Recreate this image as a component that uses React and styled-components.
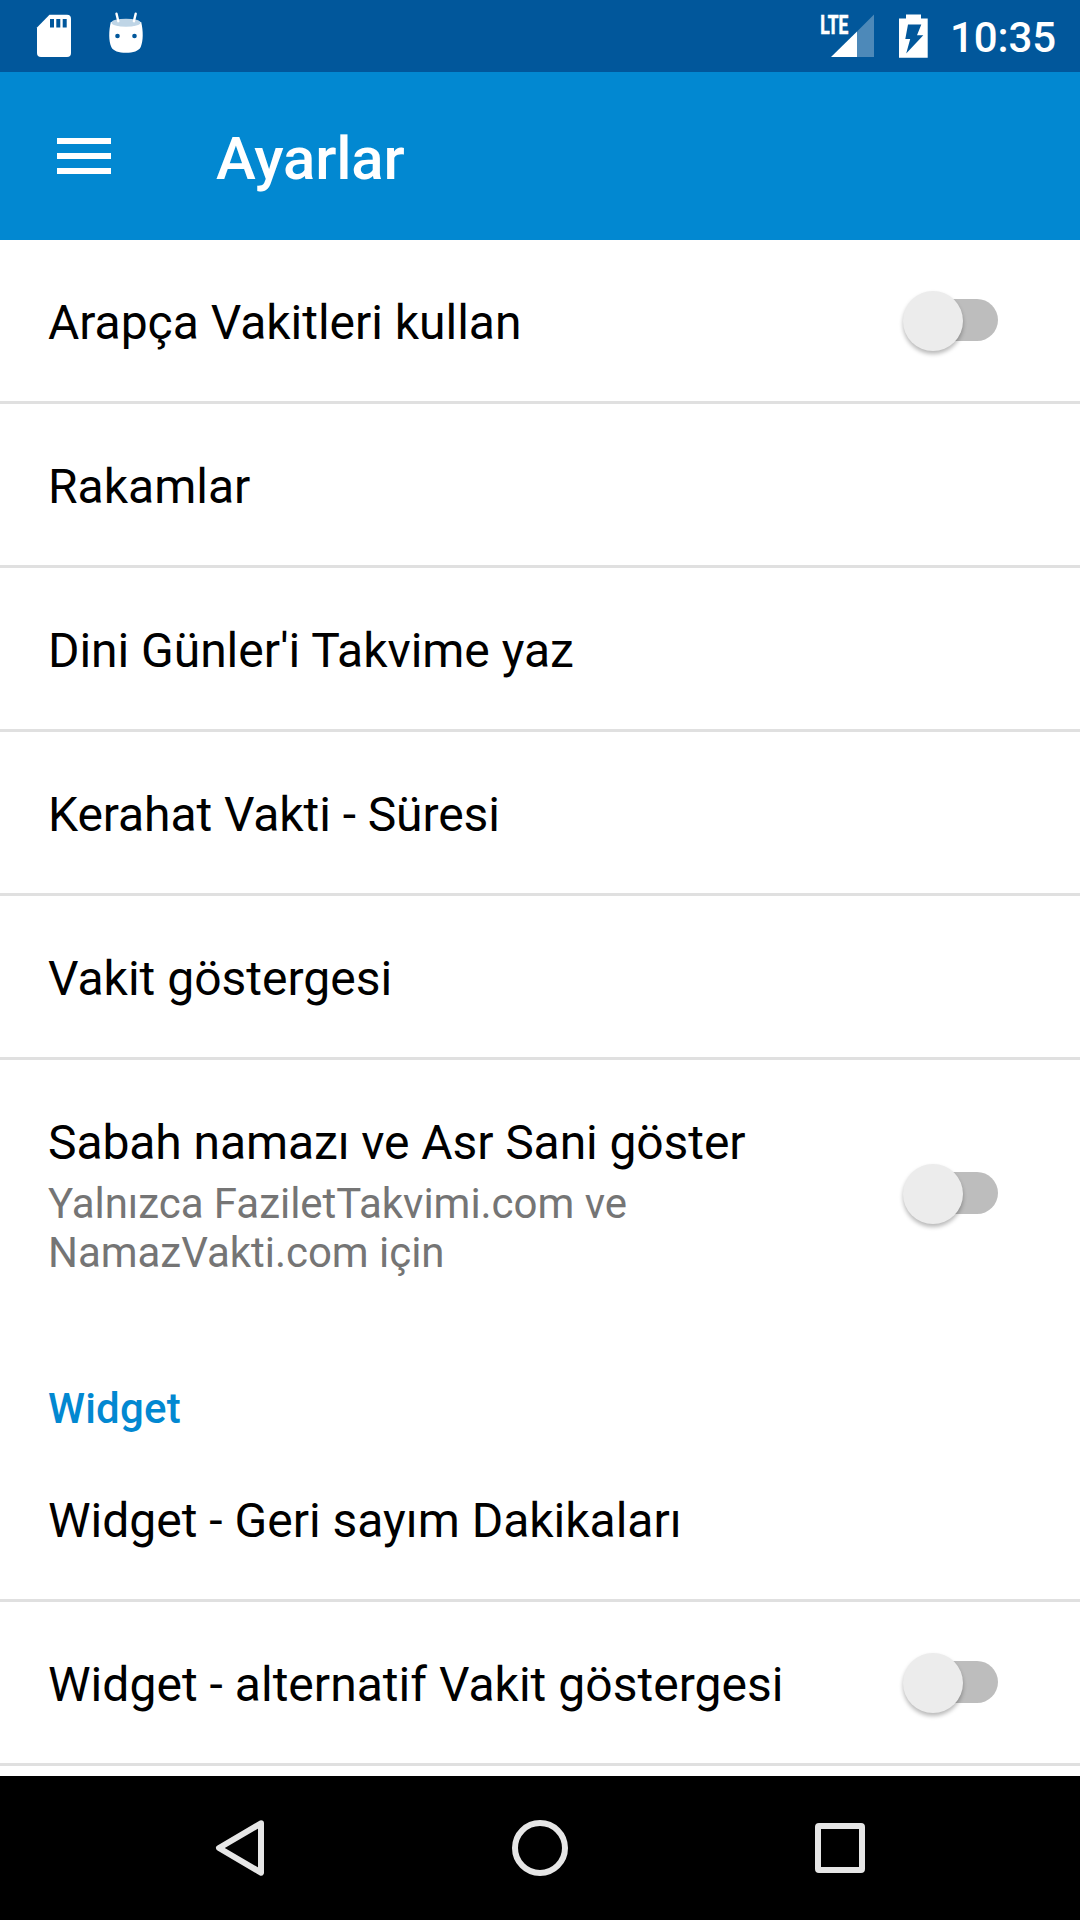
import React from "react";
import styled, { createGlobalStyle } from "styled-components";

const GlobalStyle = createGlobalStyle`
  * { box-sizing: border-box; }
  body { margin: 0; background: #fff; font-family: Roboto, "Noto Sans", sans-serif; }
`;

const Screen = styled.div`
  display: flex;
  flex-direction: column;
  width: 1080px;
  height: 1920px;
  overflow: hidden;
  background: #fff;
`;

const StatusBar = styled.div`
  display: flex;
  justify-content: space-between;
  flex: 0 0 72px;
  background: #01579b;
  color: #fff;
`;

const StatusGroup = styled.div`
  display: flex;
  align-items: flex-start;
`;

const Glyph = styled.svg`
  display: block;
  flex: none;
`;

const NetworkType = styled.text`
  font-family: Roboto, sans-serif;
  font-size: 26px;
  font-weight: 700;
  fill: #fff;
  stroke: #fff;
  stroke-width: 0.7px;
`;

const Clock = styled.time`
  width: 130px;
  padding-top: 13px;
  font-size: 42px;
  line-height: 50px;
  font-weight: 500;
  letter-spacing: -0.1px;
  white-space: nowrap;
`;

const AppBar = styled.header`
  display: flex;
  align-items: center;
  flex: 0 0 168px;
  padding-left: 57px;
  background: #0288d1;
  color: #fff;
`;

const MenuButton = styled.button`
  display: flex;
  flex-direction: column;
  gap: 9px;
  width: 54px;
  padding: 0;
  border: 0;
  background: none;
`;

const MenuLine = styled.span`
  height: 6px;
  background: #fff;
`;

const Title = styled.h1`
  margin: 6px 0 0 105px;
  font-size: 60px;
  line-height: 70px;
  font-weight: 500;
  letter-spacing: -0.15px;
`;

const List = styled.main`
  flex: 1;
  min-height: 0;
  overflow: hidden;
`;

const Row = styled.div`
  display: flex;
  align-items: center;
  justify-content: space-between;
  height: ${(p) => (p.$tall ? 266 : 164)}px;
  padding: 0 82px ${(p) => (p.$tall ? 0 : 1)}px 48px;
  border-bottom: ${(p) => (p.$tall ? "0" : "3px solid #e0e0e0")};
`;

const RowText = styled.div`
  align-self: flex-start;
  padding-top: 50px;
`;

const Label = styled.div`
  font-size: 48px;
  line-height: 65px;
  letter-spacing: ${(p) => p.$tracking || 0}px;
  color: #000;
  white-space: nowrap;
`;

const Summary = styled.div`
  width: 640px;
  margin-top: 4px;
  font-size: 42px;
  line-height: 49px;
  letter-spacing: -0.03px;
  color: #757575;
`;

const Category = styled.h2`
  height: 112px;
  margin: 0;
  padding: 58px 48px 0;
  font-size: 42px;
  line-height: 50px;
  font-weight: 500;
  letter-spacing: 0.2px;
  color: #0288d1;
`;

const Track = styled.div`
  display: flex;
  align-items: center;
  width: 84px;
  height: 42px;
  border-radius: 21px;
  background: #bdbdbd;
`;

const Thumb = styled.div`
  flex: none;
  width: 60px;
  height: 60px;
  margin: 1px 0 0 -11.5px;
  border-radius: 50%;
  background: #ececec;
  box-shadow: 0 3px 4px rgba(0, 0, 0, 0.28);
`;

const NavBar = styled.nav`
  display: flex;
  justify-content: center;
  align-items: center;
  gap: 210px;
  flex: 0 0 144px;
  background: #000;
`;

const Switch = () => (
  <Track role="switch" aria-checked="false">
    <Thumb />
  </Track>
);

const Setting = ({ label, summary, toggle, tracking }) => (
  <Row $tall={Boolean(summary)}>
    <RowText>
      <Label $tracking={tracking}>{label}</Label>
      {summary && <Summary>{summary}</Summary>}
    </RowText>
    {toggle && <Switch />}
  </Row>
);

export default function App() {
  return (
    <>
      <GlobalStyle />
      <Screen>
        <StatusBar>
          <StatusGroup>
            <Glyph width="160" height="72" viewBox="0 0 160 72">
              <path fill="#fff" d="M49.5 14.700H67a4 4 0 0 1 4 4V53a4 4 0 0 1-4 4H41a4 4 0 0 1-4-4V27.500Z" />
              <path fill="#01579b" d="M50 19h4v8.500h-4zM56.300 19h4v8.500h-4zM62.700 19h4v8.500h-4z" />
              <path fill="#fff" d="M110.800 22C108.700 31 108.600 41 111.300 47C113 51 119 52.800 126 52.800S139 51 140.700 47C143.400 41 143.300 31 141.200 22Z" />
              <ellipse cx="126" cy="22.700" rx="14.600" ry="4" fill="#bfd5e6" />
              <path stroke="#fff" strokeWidth="2.400" strokeLinecap="round" d="m116.500 13.700 1.800 7.500m17.400-7.500-1.800 7.500" />
              <circle cx="117.500" cy="36" r="2.300" fill="#01579b" />
              <circle cx="134.500" cy="36" r="2.300" fill="#01579b" />
            </Glyph>
          </StatusGroup>
          <StatusGroup>
            <Glyph width="130" height="72" viewBox="820 0 130 72">
              <path fill="#4d89b9" d="M857 31.500 874 14.500V57h-17Z" />
              <path fill="#fff" d="M831 57 857 31.500V57Z" />
              <NetworkType x="820.3" y="33.600" textLength="28" lengthAdjust="spacingAndGlyphs">
                LTE
              </NetworkType>
              <path fill="#fff" d="M906 14.500h15v4h6.700V57.700H899V18.500h7Z" />
              <path fill="#01579b" d="M908 24.500h13.300l-4.300 10.800h6.300L906.200 53.500l4-14.500H905.300Z" />
            </Glyph>
            <Clock>10:35</Clock>
          </StatusGroup>
        </StatusBar>
        <AppBar>
          <MenuButton aria-label="Menü">
            <MenuLine />
            <MenuLine />
            <MenuLine />
          </MenuButton>
          <Title>Ayarlar</Title>
        </AppBar>
        <List>
          <Setting label="Arapça Vakitleri kullan" tracking={-0.02} toggle />
          <Setting label="Rakamlar" />
          <Setting label="Dini Günler'i Takvime yaz" tracking={-0.04} />
          <Setting label="Kerahat Vakti - Süresi" tracking={-0.08} />
          <Setting label="Vakit göstergesi" />
          <Setting
            label="Sabah namazı ve Asr Sani göster"
            tracking={-0.09}
            summary="Yalnızca FaziletTakvimi.com ve NamazVakti.com için"
            toggle
          />
          <Category>Widget</Category>
          <Setting label="Widget - Geri sayım Dakikaları" />
          <Setting label="Widget - alternatif Vakit göstergesi" tracking={0.03} toggle />
        </List>
        <NavBar>
          <Glyph width="90" height="90" viewBox="0 0 90 90">
            <path d="M66 20.300 24 45 66 69.700Z" fill="none" stroke="#e6e6e6" strokeWidth="6" strokeLinejoin="round" />
          </Glyph>
          <Glyph width="90" height="90" viewBox="0 0 90 90">
            <circle cx="45" cy="45" r="25" fill="none" stroke="#e6e6e6" strokeWidth="6" />
          </Glyph>
          <Glyph width="90" height="90" viewBox="0 0 90 90">
            <rect x="23" y="23" width="44" height="44" rx="1" fill="none" stroke="#e6e6e6" strokeWidth="6" />
          </Glyph>
        </NavBar>
      </Screen>
    </>
  );
}
